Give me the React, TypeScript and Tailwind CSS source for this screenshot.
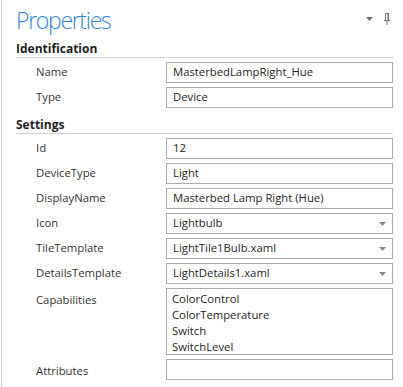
export default function App() {
  const identification = [
    { label: 'Name', value: 'MasterbedLampRight_Hue' },
    { label: 'Type', value: 'Device' },
  ];

  const settings = [
    { label: 'Id', value: '12' },
    { label: 'DeviceType', value: 'Light' },
    { label: 'DisplayName', value: 'Masterbed Lamp Right (Hue)' },
    { label: 'Icon', value: 'Lightbulb', combo: true },
    { label: 'TileTemplate', value: 'LightTile1Bulb.xaml', combo: true },
    { label: 'DetailsTemplate', value: 'LightDetails1.xaml', combo: true },
  ];

  const capabilities = ['ColorControl', 'ColorTemperature', 'Switch', 'SwitchLevel'];

  const Row = ({ label, value, combo }: { label: string; value: string; combo?: boolean }) => (
    <div className="flex items-center mt-[4px]">
      <div className="w-[150px] pl-[20px] text-[#333]">{label}</div>
      <div className="flex-1 h-[21px] border border-[#ababab] flex items-center pl-[6px] pr-[6px] text-[#1e1e1e]">
        <span className="flex-1">{value}</span>
        {combo && (
          <svg width="7" height="4" viewBox="0 0 7 4">
            <path d="M0 0 L7 0 L3.5 4 Z" fill="#8a8a8a" />
          </svg>
        )}
      </div>
    </div>
  );

  const Heading = ({ title, className }: { title: string; className?: string }) => (
    <div className={`h-[17px] leading-[16px] text-[12px] font-bold text-[#1e1e1e] border-b border-[#cfcfcf] ${className ?? ''}`}>
      {title}
    </div>
  );

  return (
    <div
      className="w-[403px] h-[387px] bg-white overflow-hidden flex text-[11.3px]"
      style={{ fontFamily: '"Open Sans", "Noto Sans", sans-serif' }}
    >
      <div className="ml-px w-full border-l border-[#d0d0d0] pl-[14px] pr-[10px]">
        <div className="h-[41px] flex items-start justify-between">
          <div className="text-[23px] font-light leading-[30px] mt-[5px] tracking-[-1.3px] text-[#2f86d8]">Properties</div>
          <div className="flex items-center gap-[11px] mt-[13px] mr-[3px]">
            <svg width="7" height="4" viewBox="0 0 7 4">
              <path d="M0 0 L7 0 L3.5 4 Z" fill="#707070" />
            </svg>
            <svg width="6" height="12" viewBox="0 0 6 12">
              <path d="M1.5 0.5 H4.5 V7 M1.5 0.5 V7" stroke="#707070" strokeWidth="1" fill="none" />
              <rect x="3.5" y="0.5" width="1" height="6.5" fill="#707070" />
              <path d="M0 7.5 H6" stroke="#707070" strokeWidth="1" />
              <path d="M3 8 V12" stroke="#707070" strokeWidth="1" />
            </svg>
          </div>
        </div>

        <Heading title="Identification" />
        {identification.map((r) => (
          <Row key={r.label} {...r} />
        ))}

        <Heading title="Settings" className="mt-[9px]" />
        {settings.map((r) => (
          <Row key={r.label} {...r} />
        ))}

        <div className="flex items-start mt-[4px]">
          <div className="w-[150px] pl-[20px] pt-[4px] text-[#333]">Capabilities</div>
          <div className="flex-1 h-[67px] border border-[#ababab] pl-[5px] pt-[2px] leading-[16px] text-[#1e1e1e]">
            {capabilities.map((c) => (
              <div key={c}>{c}</div>
            ))}
          </div>
        </div>

        <div className="flex items-center mt-[4px]">
          <div className="w-[150px] pl-[20px] pt-[4px] text-[#333]">Attributes</div>
          <div className="flex-1 h-[21px] border border-[#ababab]" />
        </div>
      </div>
    </div>
  );
}
